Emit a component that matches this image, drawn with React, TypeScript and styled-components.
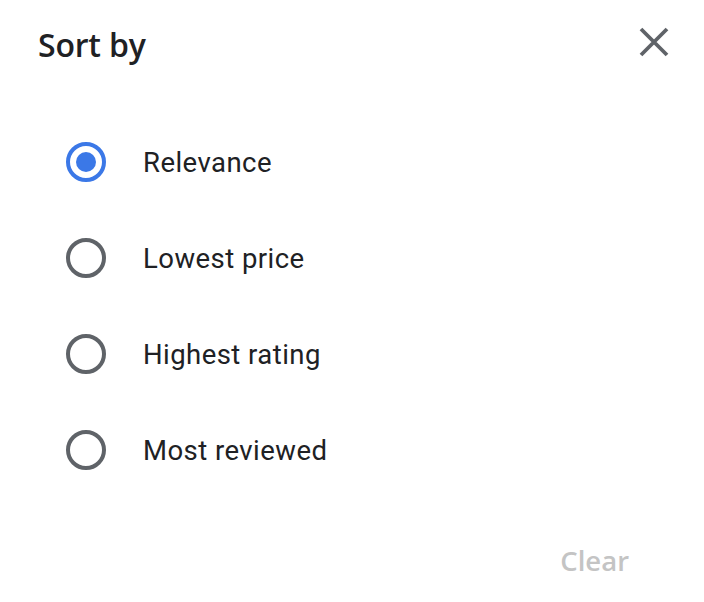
import React, { useState } from 'react';
import styled, { createGlobalStyle } from 'styled-components';

const GlobalStyle = createGlobalStyle`
  html, body {
    margin: 0;
    padding: 0;
    background: #ffffff;
  }
`;

const Dialog = styled.div`
  width: 704px;
  height: 602px;
  box-sizing: border-box;
  display: flex;
  flex-direction: column;
  background: #ffffff;
`;

const Header = styled.div`
  display: flex;
  align-items: center;
  justify-content: space-between;
  height: 90px;
  padding: 0 24px 0 38px;
`;

const Title = styled.h2`
  margin: 0;
  font-family: 'Open Sans', 'Noto Sans', sans-serif;
  font-weight: 600;
  font-size: 32px;
  color: #202124;
  letter-spacing: -0.2px;
  margin-top: -2px;
`;

const CloseButton = styled.button`
  width: 52px;
  height: 52px;
  border: none;
  background: transparent;
  padding: 0;
  display: flex;
  align-items: center;
  justify-content: center;
  cursor: pointer;
  margin-top: -6px;
`;

const OptionList = styled.div`
  display: flex;
  flex-direction: column;
  padding: 24px 0 0 66px;
`;

const OptionRow = styled.label`
  display: flex;
  align-items: center;
  gap: 37px;
  height: 96px;
  cursor: pointer;
`;

const RadioCircle = styled.span<{ $checked: boolean }>`
  width: 40px;
  height: 40px;
  box-sizing: border-box;
  border-radius: 50%;
  border: 4px solid ${p => (p.$checked ? '#3b78e7' : '#5f6368')};
  display: flex;
  align-items: center;
  justify-content: center;
  &::after {
    content: '';
    width: 20px;
    height: 20px;
    border-radius: 50%;
    background: #3b78e7;
    display: ${p => (p.$checked ? 'block' : 'none')};
  }
`;

const OptionLabel = styled.span`
  font-family: Roboto, 'Liberation Sans', sans-serif;
  font-size: 27.5px;
  color: #202124;
  letter-spacing: 0.45px;
`;

const Footer = styled.div`
  margin-top: auto;
  display: flex;
  justify-content: flex-end;
  padding: 0 75px 21px 0;
`;

const ClearButton = styled.button`
  border: none;
  background: transparent;
  padding: 0;
  font-family: 'Open Sans', 'Noto Sans', sans-serif;
  font-weight: 600;
  font-size: 27.5px;
  color: #c4c4c4;
  line-height: 40px;
`;

const options = ['Relevance', 'Lowest price', 'Highest rating', 'Most reviewed'];

export default function App() {
  const [selected, setSelected] = useState(0);

  return (
    <>
      <GlobalStyle />
      <Dialog>
        <Header>
          <Title>Sort by</Title>
          <CloseButton aria-label="Close">
            <svg width="30" height="30" viewBox="0 0 30 30">
              <path d="M2 2 L28 28 M28 2 L2 28" stroke="#5f6368" strokeWidth="3.8" />
            </svg>
          </CloseButton>
        </Header>
        <OptionList>
          {options.map((o, i) => (
            <OptionRow key={o} onClick={() => setSelected(i)}>
              <RadioCircle $checked={selected === i} />
              <OptionLabel>{o}</OptionLabel>
            </OptionRow>
          ))}
        </OptionList>
        <Footer>
          <ClearButton disabled>Clear</ClearButton>
        </Footer>
      </Dialog>
    </>
  );
}
